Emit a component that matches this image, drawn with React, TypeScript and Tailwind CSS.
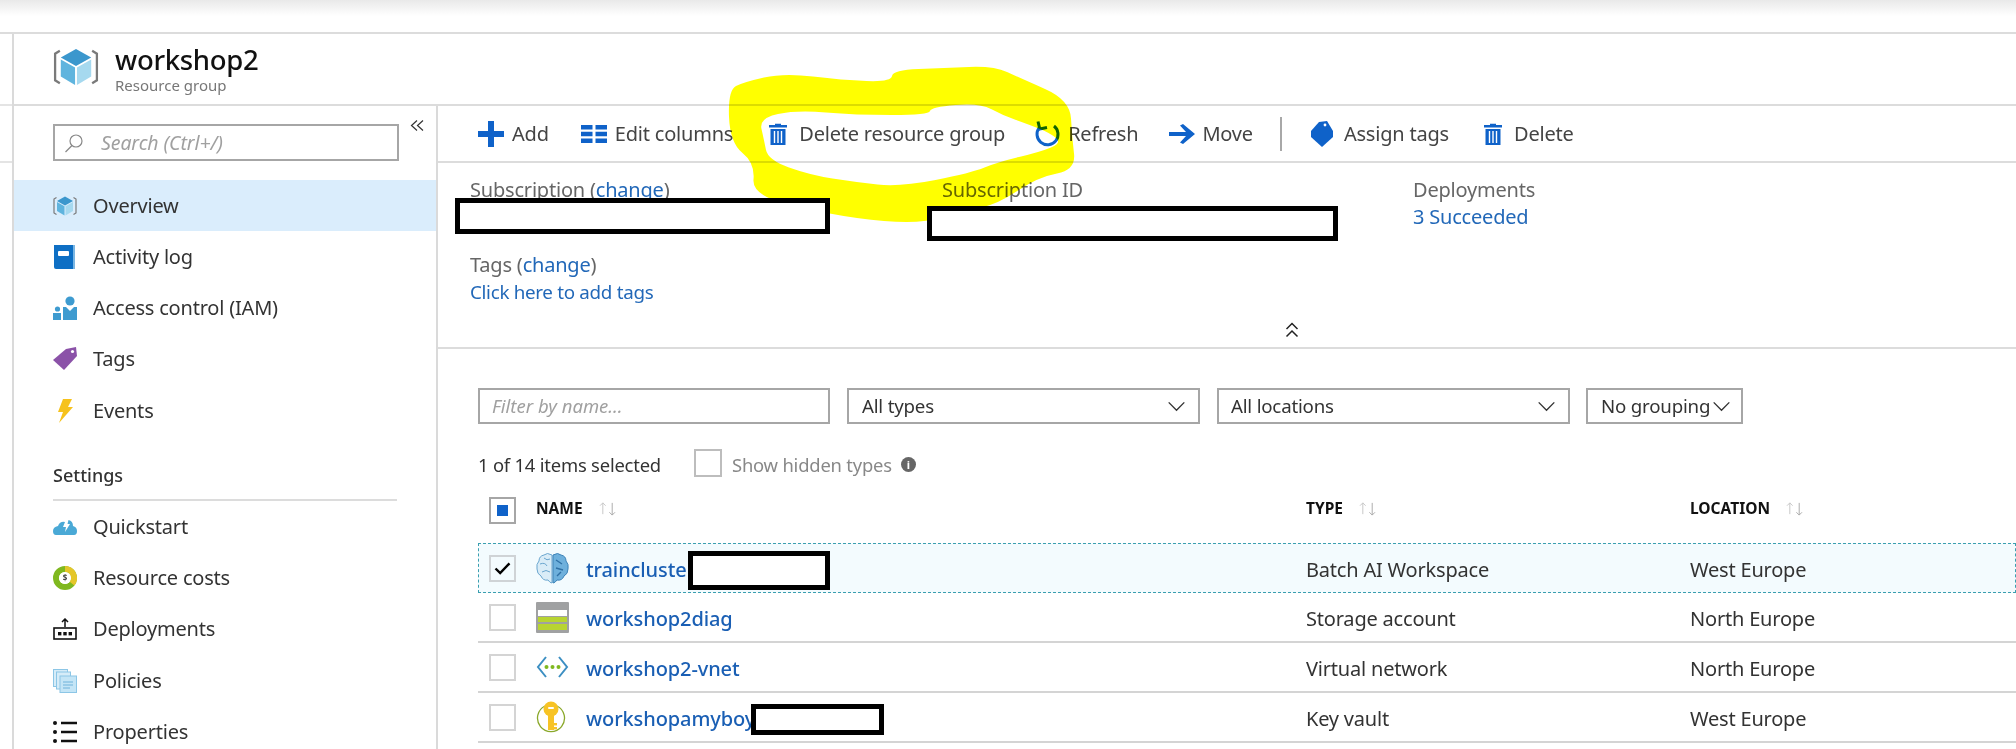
import React from "react";

const FONT = { fontFamily: '"Noto Sans", "Open Sans", sans-serif' };

// ---- icons ----
function CubeIcon({ className }: { className: string }) {
  return (
    <svg viewBox="0 0 48 40" className={className}>
      <path d="M7 3 L2 6 L2 34 L7 37" fill="none" stroke="#7a7a7a" strokeWidth="2.4" />
      <path d="M41 3 L46 6 L46 34 L41 37" fill="none" stroke="#7a7a7a" strokeWidth="2.4" />
      <path d="M24 1 L40 10 L24 19 L8 10 Z" fill="#3b97cd" />
      <path d="M8 12 L23 20.5 L23 39 L8 30 Z" fill="#5fb4de" />
      <path d="M25 20.5 L40 12 L40 30 L25 39 Z" fill="#a6d9ef" />
    </svg>
  );
}

function ActivityIcon() {
  return (
    <svg viewBox="0 0 24 24" className="w-[24px] h-[24px]">
      <path d="M1 0 H22 V24 H3 Q1 24 1 22 Z" fill="#0e6fc4" />
      <rect x="20" y="0" width="2" height="24" fill="#7ab6e3" />
      <rect x="5" y="6" width="11" height="5" rx="1" fill="#fff" />
    </svg>
  );
}

function AccessIcon() {
  return (
    <svg viewBox="0 0 24 24" className="w-[24px] h-[24px]">
      <circle cx="17" cy="5" r="4.6" fill="#3e9bd0" />
      <path d="M10 11 H13 L17 15 L21 11 H24 V24 H10 Z" fill="#3e9bd0" />
      <circle cx="4.5" cy="13" r="2.6" fill="#3e9bd0" />
      <path d="M0 17 H8 V24 H0 Z" fill="#3e9bd0" />
    </svg>
  );
}

function TagsIcon() {
  return (
    <svg viewBox="0 0 24 24" className="w-[24px] h-[24px]">
      <path d="M0 13 L13 2 L23 0 L24 9 L11 23 Z" fill="#8b52a8" />
      <circle cx="19.5" cy="4.5" r="1.6" fill="#fff" />
    </svg>
  );
}

function BoltIcon() {
  return (
    <svg viewBox="0 0 24 24" className="w-[24px] h-[24px]">
      <path d="M10 0 H19 L15 8 L20 8 L6 24 L10 13 L5 13 Z" fill="#f6c21c" />
    </svg>
  );
}

function QuickstartIcon() {
  return (
    <svg viewBox="0 0 24 16" className="w-[24px] h-[16px]">
      <path d="M3 16 Q0 16 0 12 Q0 8 5 7 Q7 2 12 3 L10 8 L13 8 L12 13 L17 5 L14.5 5 L15.5 1 Q20 2 20 7 Q24 8 24 12 Q24 16 21 16 Z" fill="#4aa9d6" />
    </svg>
  );
}

function CostsIcon() {
  return (
    <svg viewBox="0 0 24 24" className="w-[24px] h-[24px]">
      <circle cx="12" cy="12" r="9" fill="none" stroke="#7fb81f" strokeWidth="6" />
      <path d="M12 3 A9 9 0 0 1 19 17.6" fill="none" stroke="#e5c62a" strokeWidth="6" />
      <circle cx="12" cy="12" r="6" fill="#fff" />
      <text x="12" y="15" textAnchor="middle" fontSize="8" fontWeight="700" fill="#444">$</text>
    </svg>
  );
}

function DeployIcon() {
  return (
    <svg viewBox="0 0 24 22" className="w-[24px] h-[22px]">
      <path d="M12 9 V1 M9 4 L12 1 L15 4" fill="none" stroke="#111" strokeWidth="1.5" />
      <rect x="1" y="10" width="22" height="11" fill="none" stroke="#111" strokeWidth="1.6" />
      <rect x="5" y="14" width="3.4" height="3.4" fill="#111" />
      <rect x="10.3" y="14" width="3.4" height="3.4" fill="#111" />
      <rect x="15.6" y="14" width="3.4" height="3.4" fill="#111" />
    </svg>
  );
}

function PoliciesIcon() {
  return (
    <svg viewBox="0 0 24 24" className="w-[24px] h-[24px]">
      <rect x="0.5" y="0.5" width="14" height="17" fill="#d6ecf8" stroke="#8cc6e6" />
      <rect x="3.5" y="3" width="14" height="17" fill="#d6ecf8" stroke="#8cc6e6" />
      <rect x="7" y="7" width="16.5" height="16.5" fill="#c4e5f6" stroke="#8cc6e6" />
      <path d="M10 13 H20 M10 16 H20 M10 19 H17" stroke="#6fb2da" strokeWidth="1" />
    </svg>
  );
}

function PropertiesIcon() {
  return (
    <svg viewBox="0 0 24 24" className="w-[24px] h-[24px]">
      <circle cx="2" cy="3" r="2" fill="#111" />
      <circle cx="2" cy="12" r="2" fill="#111" />
      <circle cx="2" cy="21" r="2" fill="#111" />
      <path d="M8 3 H24 M8 12 H24 M8 21 H24" stroke="#111" strokeWidth="2.4" />
    </svg>
  );
}

function TrashIcon({ className }: { className: string }) {
  return (
    <svg viewBox="0 0 18 22" className={className}>
      <path d="M6 2 V0.8 H12 V2 H18 V4.4 H0 V2 Z" fill="#0f62c9" />
      <path d="M1.5 6 H16.5 V22 H1.5 Z" fill="#0f62c9" />
      <path d="M5.5 8 V20 M9 8 V20 M12.5 8 V20" stroke="#fff" strokeWidth="1.4" />
    </svg>
  );
}

function SortArrows() {
  return (
    <svg viewBox="0 0 20 16" className="w-[19px] h-[15px]">
      <path d="M5 14 V2 M2 5 L5 2 L8 5" fill="none" stroke="#c4c4c4" strokeWidth="1" />
      <path d="M15 2 V15 M12 12 L15 15 L18 12" fill="none" stroke="#a8a8a8" strokeWidth="1" />
    </svg>
  );
}

function Chevron() {
  return (
    <svg viewBox="0 0 20 12" className="w-[19px] h-[11px] shrink-0">
      <path d="M1.5 1.5 L10 10 L18.5 1.5" fill="none" stroke="#333" strokeWidth="1.5" />
    </svg>
  );
}

function BrainIcon() {
  return (
    <svg viewBox="0 0 33 33" className="w-[33px] h-[33px]">
      <path d="M16 3 Q11 0 8 3 Q3 4 3 9 Q0 12 1 17 Q1 22 5 24 Q7 29 12 28 Q14 31 16 31 Z" fill="#d9ecf7" stroke="#6aa6cf" strokeWidth="1" />
      <path d="M17 3 Q22 0 25 3 Q30 4 30 9 Q33 12 32 17 Q32 22 28 24 Q26 29 21 28 Q19 31 17 31 Z" fill="#6eb0dc" stroke="#3d83b8" strokeWidth="1" />
      <path d="M4 12 Q9 10 11 14 M6 20 Q10 17 14 20 M8 6 Q11 9 14 7" fill="none" stroke="#6aa6cf" strokeWidth="1" />
      <path d="M20 8 L26 12 M20 16 L27 18 M21 24 L25 20" fill="none" stroke="#2f70a5" strokeWidth="1.4" />
    </svg>
  );
}

function StorageIcon() {
  return (
    <svg viewBox="0 0 33 31" className="w-[33px] h-[31px]">
      <rect width="33" height="31" rx="1" fill="#a0a1a2" />
      <rect x="2" y="8" width="29" height="6" fill="#fff" />
      <rect x="2" y="15" width="29" height="5" fill="#b8d432" />
      <rect x="2" y="22" width="29" height="6" fill="#b8d432" />
    </svg>
  );
}

function VnetIcon() {
  return (
    <svg viewBox="0 0 33 24" className="w-[33px] h-[24px]">
      <path d="M10 2 L2 12 L10 22" fill="none" stroke="#3c8fc2" strokeWidth="2" />
      <path d="M23 2 L31 12 L23 22" fill="none" stroke="#3c8fc2" strokeWidth="2" />
      <circle cx="10.5" cy="12" r="2" fill="#7fb81f" />
      <circle cx="16.5" cy="12" r="2" fill="#7fb81f" />
      <circle cx="22.5" cy="12" r="2" fill="#7fb81f" />
    </svg>
  );
}

function KeyIcon() {
  return (
    <svg viewBox="0 0 30 32" className="w-[30px] h-[32px]">
      <path d="M9 5 A13.5 13.5 0 1 0 21 5" fill="none" stroke="#8aa82a" strokeWidth="1.3" />
      <circle cx="15" cy="8" r="7.5" fill="#f7c325" />
      <rect x="12" y="12" width="6" height="17" fill="#f7c325" />
      <rect x="17" y="22" width="4" height="2.4" fill="#f7c325" />
      <rect x="17" y="26" width="4" height="2.4" fill="#f7c325" />
      <rect x="12" y="6" width="6" height="2" rx="1" fill="#fff" />
    </svg>
  );
}

// ---- data ----
const NAV_TOP = [
  { label: "Overview", icon: <CubeIcon className="w-[24px] h-[20px]" />, active: true },
  { label: "Activity log", icon: <ActivityIcon /> },
  { label: "Access control (IAM)", icon: <AccessIcon /> },
  { label: "Tags", icon: <TagsIcon /> },
  { label: "Events", icon: <BoltIcon /> },
];

const NAV_SETTINGS = [
  { label: "Quickstart", icon: <QuickstartIcon /> },
  { label: "Resource costs", icon: <CostsIcon /> },
  { label: "Deployments", icon: <DeployIcon /> },
  { label: "Policies", icon: <PoliciesIcon /> },
  { label: "Properties", icon: <PropertiesIcon /> },
];

const ROWS = [
  { name: "traincluster", type: "Batch AI Workspace", location: "West Europe", icon: <BrainIcon />, selected: true },
  { name: "workshop2diag", type: "Storage account", location: "North Europe", icon: <StorageIcon /> },
  { name: "workshop2-vnet", type: "Virtual network", location: "North Europe", icon: <VnetIcon /> },
  { name: "workshopamyboy", type: "Key vault", location: "West Europe", icon: <KeyIcon /> },
];

// outline of the yellow marker ring
const RING_OUTER: number[][] = [
  [728, 90], [744, 82], [784, 73], [842, 80], [891, 82], [893, 70], [944, 68], [994, 66], [1020, 78], [1070, 100],
  [1072, 137], [1076, 170], [1038, 177], [998, 204], [962, 212], [927, 222], [886, 222], [828, 214], [752, 196],
  [755, 163], [730, 143],
];
const RING_INNER: number[][] = [
  [759, 118], [797, 110], [855, 115], [929, 115], [931, 107], [980, 103], [1002, 115], [1030, 125], [1050, 133],
  [1062, 143], [1040, 152], [998, 162], [971, 173], [900, 187], [855, 182], [810, 175], [768, 160], [764, 140],
];

function smoothLoop(points: number[][]) {
  const mid = (a: number[], b: number[]) => [(a[0] + b[0]) / 2, (a[1] + b[1]) / 2];
  const n = points.length;
  const start = mid(points[n - 1], points[0]);
  let d = `M${start[0]} ${start[1]}`;
  points.forEach((p, i) => {
    const m = mid(p, points[(i + 1) % n]);
    d += ` Q${p[0]} ${p[1]} ${m[0]} ${m[1]}`;
  });
  return d + " Z";
}

function NavItem({ label, icon, active }: { label: string; icon: React.ReactNode; active?: boolean }) {
  return (
    <div className={`h-[51.25px] flex items-center pl-[39px] ${active ? "bg-[#daedfc]" : ""}`}>
      <span className="w-[24px] flex justify-center">{icon}</span>
      <span className="ml-[16px] text-[20px] tracking-[-0.2px] text-[#333]">{label}</span>
    </div>
  );
}

function ToolButton({ icon, label, iconWidth, gap, className }: { icon: React.ReactNode; label: string; iconWidth: string; gap: string; className: string }) {
  return (
    <div className={`flex items-center ${className}`}>
      <span className={`flex justify-center ${iconWidth}`}>{icon}</span>
      <span className={`${gap} text-[20px] tracking-[-0.2px] text-[#444]`}>{label}</span>
    </div>
  );
}

function Select({ label, className }: { label: string; className: string }) {
  return (
    <div className={`h-[36px] border-2 border-[#a6a6a6] flex items-center justify-between text-[18.7px] tracking-[-0.2px] text-[#333] ${className}`}>
      <span>{label}</span>
      <Chevron />
    </div>
  );
}

function Check({ checked }: { checked?: boolean }) {
  return (
    <div className={`w-[27px] h-[27px] border-2 flex items-center justify-center ${checked ? "border-[#cfd3d6]" : "border-[#d4d4d4]"}`}>
      {checked && (
        <svg viewBox="0 0 18 14" className="w-[17px] h-[13px]">
          <path d="M1.5 7 L6.5 12 L16.5 1.5" fill="none" stroke="#000" strokeWidth="2.6" />
        </svg>
      )}
    </div>
  );
}

export default function App() {
  return (
    <div className="relative w-[2016px] h-[749px] overflow-hidden bg-white" style={FONT}>
      {/* top shadow strip */}
      <div className="h-[32px] bg-gradient-to-b from-[#e9e9e9] via-white via-50% to-white border-b-2 border-[#dcdcdc] box-content" />

      <div className="flex">
        {/* previous blade edge */}
        <div className="w-[12px] border-r-2 border-[#dadada] h-[720px] box-content">
          <div className="h-[72px] border-b-2 border-[#e4e4e4]" />
          <div className="h-[57px] border-b-2 border-[#e4e4e4]" />
        </div>

        <div className="flex-1 min-w-0">
          {/* blade header */}
          <div className="h-[70px] flex items-center border-b-2 border-[#dcdcdc] box-content pl-[39px]">
            <CubeIcon className="w-[46px] h-[38px] mb-[4px]" />
            <div className="ml-[16px] -mt-[3px]">
              <div className="text-[27.5px] leading-[34px] font-medium text-[#111] tracking-[-0.3px]">workshop2</div>
              <div className="text-[15px] leading-[16px] text-[#777]">Resource group</div>
            </div>
          </div>

          <div className="flex">
            {/* sidebar */}
            <div className="w-[422px] h-[650px] shrink-0 border-r-2 border-[#dadada] box-content">
              <div className="flex items-start pt-[18px] pl-[39px] h-[74px]">
                <div className="w-[346px] h-[37px] border-2 border-[#a6a6a6] flex items-center pl-[9px]">
                  <svg viewBox="0 0 20 20" className="w-[20px] h-[20px]">
                    <circle cx="12" cy="8" r="6" fill="none" stroke="#888" strokeWidth="1.2" />
                    <path d="M8 12.5 L1.5 19" stroke="#888" strokeWidth="1.2" />
                  </svg>
                  <span className="ml-[17px] italic text-[19.5px] tracking-[-0.1px] text-[#a0a0a0]">Search (Ctrl+/)</span>
                </div>
                <svg viewBox="0 0 14 12" className="ml-[11px] -mt-[5px] w-[14px] h-[13px]">
                  <path d="M7 1 L1.5 6 L7 11 M13 1 L7.5 6 L13 11" fill="none" stroke="#333" strokeWidth="1.2" />
                </svg>
              </div>

              {NAV_TOP.map((item) => (
                <NavItem key={item.label} {...item} />
              ))}

              <div className="mx-[39px] mt-[26px] h-[37px] border-b-2 border-[#dcdcdc] box-content text-[18px] font-medium text-[#333]">
                Settings
              </div>

              <div>
                {NAV_SETTINGS.map((item) => (
                  <NavItem key={item.label} {...item} />
                ))}
              </div>
            </div>

            {/* main column */}
            <div className="flex-1 min-w-0">
              {/* toolbar */}
              <div className="relative h-[55px] flex items-center border-b-2 border-[#dcdcdc] box-content">
                <ToolButton className="ml-[40px]" iconWidth="w-[26px]" gap="ml-[8px]" label="Add" icon={
                  <svg viewBox="0 0 26 26" className="w-[26px] h-[26px]"><path d="M10 0 H16 V10 H26 V16 H16 V26 H10 V16 H0 V10 H10 Z" fill="#0f62c9" /></svg>
                } />
                <ToolButton className="ml-[32px]" iconWidth="w-[26px]" gap="ml-[8px]" label="Edit columns" icon={
                  <svg viewBox="0 0 26 18" className="w-[26px] h-[18px]"><path d="M0 0 H11.5 V4.5 H0 Z M14.5 0 H26 V4.5 H14.5 Z M0 6.8 H11.5 V11.3 H0 Z M14.5 6.8 H26 V11.3 H14.5 Z M0 13.5 H11.5 V18 H0 Z M14.5 13.5 H26 V18 H14.5 Z" fill="#0f62c9" /></svg>
                } />
                <ToolButton className="ml-[36px]" iconWidth="w-[18px]" gap="ml-[12px]" label="Delete resource group" icon={<TrashIcon className="w-[18px] h-[22px]" />} />
                <ToolButton className="ml-[30px]" iconWidth="w-[26px]" gap="ml-[7px]" label="Refresh" icon={
                  <svg viewBox="0 0 26 26" className="w-[26px] h-[26px]">
                    <path d="M4.5 6.5 A10.5 10.5 0 1 0 19 5" fill="none" stroke="#0f62c9" strokeWidth="3" />
                    <path d="M3 0.5 L4.8 8 L12 6.5" fill="none" stroke="#0f62c9" strokeWidth="3" />
                  </svg>
                } />
                <ToolButton className="ml-[31px]" iconWidth="w-[26px]" gap="ml-[7px]" label="Move" icon={
                  <svg viewBox="0 0 26 20" className="w-[26px] h-[20px]"><path d="M0 8 H17 L11 1.5 L14 0 L26 10 L14 20 L11 18.5 L17 12 H0 Z" fill="#0f62c9" /></svg>
                } />
                <div className="ml-[27px] w-[2px] h-[34px] bg-[#a8a8a8]" />
                <ToolButton className="ml-[29px]" iconWidth="w-[22px]" gap="ml-[11px]" label="Assign tags" icon={
                  <svg viewBox="0 0 22 26" className="w-[22px] h-[26px]"><path d="M0 10 L8 1 L16 0 L22 10 L22 16 L11 26 L0 16 Z" fill="#0f62c9" /><circle cx="14" cy="4" r="1.4" fill="#fff" /></svg>
                } />
                <ToolButton className="ml-[35px]" iconWidth="w-[18px]" gap="ml-[12px]" label="Delete" icon={<TrashIcon className="w-[18px] h-[22px]" />} />
              </div>

              {/* essentials */}
              <div className="relative h-[184px] border-b-2 border-[#dcdcdc] box-content text-[20px] tracking-[-0.2px]">
                <div className="grid grid-cols-[472px_471px_1fr] pl-[32px] pt-[15px]">
                  <div className="leading-[24px] text-[#666]">
                    Subscription (<span className="text-[#2268b8]">change</span>)
                  </div>
                  <div className="leading-[24px] text-[#666]">Subscription ID</div>
                  <div className="leading-[24px] text-[#666]">
                    Deployments
                    <div className="mt-[3px] text-[#2268b8]">3 Succeeded</div>
                  </div>
                </div>
                <div className="pl-[32px] mt-[24px] leading-[24px] text-[#666]">
                  Tags (<span className="text-[#2268b8]">change</span>)
                  <div className="mt-[3px] text-[18.8px] tracking-[-0.3px] text-[#2268b8]">Click here to add tags</div>
                </div>
                <div className="pl-[847px] mt-[18px]">
                  <svg viewBox="0 0 14 16" className="w-[14px] h-[16px]">
                    <path d="M1.5 7 L7 1.5 L12.5 7 M1.5 14.5 L7 9 L12.5 14.5" fill="none" stroke="#222" strokeWidth="1.5" />
                  </svg>
                </div>
              </div>

              {/* list */}
              <div className="pl-[40px]">
                <div className="flex mt-[39px] h-[36px]">
                  <div className="w-[352px] h-[36px] border-2 border-[#a6a6a6] flex items-center pl-[12px] italic text-[18.5px] text-[#a0a0a0]">
                    Filter by name...
                  </div>
                  <Select label="All types" className="ml-[17px] w-[353px] pl-[13px] pr-[12px]" />
                  <Select label="All locations" className="ml-[17px] w-[353px] pl-[12px] pr-[12px]" />
                  <Select label="No grouping" className="ml-[16px] w-[157px] pl-[13px] pr-[10px]" />
                </div>

                <div className="flex items-center mt-[25px] h-[28px]">
                  <span className="w-[216px] pt-[3px] text-[18.4px] tracking-[-0.2px] text-[#333]">1 of 14 items selected</span>
                  <span className="w-[28px] h-[28px] border-2 border-[#bdbdbd]" />
                  <span className="ml-[10px] pt-[3px] text-[18.4px] tracking-[-0.2px] text-[#888]">Show hidden types</span>
                  <span className="ml-[9px] mt-[2px] w-[15px] h-[15px] rounded-full bg-[#666] text-white text-[11px] leading-[15px] font-bold text-center">i</span>
                </div>

                {/* table head */}
                <div className="grid grid-cols-[47px_770px_384px_1fr] items-center h-[66px] pl-[11px]">
                  <div className="w-[27px] h-[27px] border-2 border-[#a6a6a6] flex items-center justify-center">
                    <span className="w-[11px] h-[11px] bg-[#0f62c9]" />
                  </div>
                  <div className="flex items-center gap-[15px] text-[15.5px] font-bold text-[#111] -mt-[3px]">NAME <SortArrows /></div>
                  <div className="flex items-center gap-[15px] text-[15.5px] font-bold text-[#111] -mt-[3px]">TYPE <SortArrows /></div>
                  <div className="flex items-center gap-[15px] text-[15.5px] font-bold text-[#111] -mt-[3px]">LOCATION <SortArrows /></div>
                </div>

                {/* rows */}
                {ROWS.map((row) => (
                  <div
                    key={row.name}
                    className={`grid grid-cols-[47px_50px_720px_384px_1fr] items-center h-[50px] ${
                      row.selected
                        ? "pl-[10px] border border-dashed border-[#3a9fb0] bg-[#f3fbfe]"
                        : "pl-[11px] border-b-2 border-[#d4d4d4]"
                    }`}
                  >
                    <Check checked={row.selected} />
                    <div className="flex justify-start">{row.icon}</div>
                    <div className="pt-[4px] text-[20px] font-medium tracking-[-0.1px] text-[#1a5fb4]">{row.name}</div>
                    <div className="pt-[4px] text-[20px] tracking-[-0.2px] text-[#333]">{row.type}</div>
                    <div className="pt-[4px] text-[20px] tracking-[-0.2px] text-[#333]">{row.location}</div>
                  </div>
                ))}
              </div>
            </div>
          </div>
        </div>
      </div>

      {/* hand drawn annotation */}
      <svg className="absolute left-0 top-0 mix-blend-multiply pointer-events-none" width="2016" height="749" viewBox="0 0 2016 749">
        <path fillRule="evenodd" fill="#ffff00" d={`${smoothLoop(RING_OUTER)} ${smoothLoop(RING_INNER)}`} />
      </svg>

      {/* redaction boxes */}
      <div className="absolute left-[455px] top-[198px] w-[375px] h-[36px] border-[5px] border-black bg-white" />
      <div className="absolute left-[927px] top-[206px] w-[411px] h-[35px] border-[5px] border-black bg-white" />
      <div className="absolute left-[688px] top-[551px] w-[142px] h-[39px] border-[5px] border-black bg-white" />
      <div className="absolute left-[751px] top-[704px] w-[133px] h-[31px] border-[5px] border-black bg-white" />
    </div>
  );
}
